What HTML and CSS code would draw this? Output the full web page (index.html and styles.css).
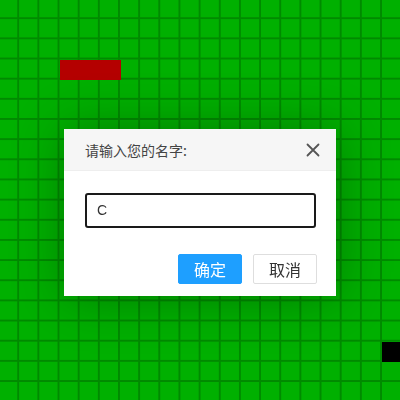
FILE: index.html
```html
<!DOCTYPE html>
<html lang="zh-CN">
<head>
<meta charset="utf-8">
<title>贪吃蛇</title>
<link rel="stylesheet" href="styles.css">
</head>
<body>
<div class="board">
  <div class="cell snake" style="grid-column: 4; grid-row: 4;"></div>
  <div class="cell snake" style="grid-column: 5; grid-row: 4;"></div>
  <div class="cell snake" style="grid-column: 6; grid-row: 4;"></div>
  <div class="cell food" style="grid-column: 20; grid-row: 18;"></div>
</div>

<div class="layer">
  <div class="layer-title">
    <span>请输入您的名字:</span>
    <button class="layer-close" aria-label="关闭">
      <svg width="14" height="14" viewBox="0 0 14 14"><path d="M1.5 1.5 L12.5 12.5 M12.5 1.5 L1.5 12.5" stroke="#555" stroke-width="1.8" fill="none" stroke-linecap="round"/></svg>
    </button>
  </div>
  <div class="layer-content">
    <div class="layer-input">C</div>
  </div>
  <div class="layer-btns">
    <span class="btn btn-ok">确定</span>
    <span class="btn btn-cancel">取消</span>
  </div>
</div>
</body>
</html>
```
FILE: styles.css
```css
html, body {
  margin: 0;
  padding: 0;
  width: 400px;
  height: 400px;
  overflow: hidden;
  background: #00b000;
  font-family: "Noto Sans CJK SC", "Liberation Sans", sans-serif;
}

.board {
  margin: -0.87px 0 0 -0.87px;
  width: 403.4px;
  height: 403.4px;
  display: grid;
  grid-template-columns: repeat(20, 20.17px);
  grid-template-rows: repeat(20, 20.17px);
  background-color: #00b000;
  background-image:
    linear-gradient(to right, transparent 18.6px, #008a00 18.6px, #008a00 20.17px),
    linear-gradient(to bottom, transparent 18.6px, #008a00 18.6px, #008a00 20.17px);
  background-size: 20.17px 20.17px;
}

.cell.snake {
  background: #b40000;
  margin: 0 -0.5px 0 0;
}
.cell.food {
  background: #000;
}

.layer {
  position: fixed;
  left: 64px;
  top: 129px;
  width: 272px;
  background: #fff;
  box-shadow: 1px 1px 50px rgba(0, 0, 0, 0.3);
  display: flex;
  flex-direction: column;
}

.layer-title {
  height: 41px;
  border-bottom: 1px solid #eee;
  background: #f6f6f6;
  display: flex;
  align-items: center;
  justify-content: space-between;
  padding: 0 16px 0 21px;
  font-size: 14px;
  color: #444;
}

.layer-close {
  border: 0;
  background: none;
  padding: 0;
  width: 14px;
  height: 14px;
  display: flex;
  margin-top: 1px;
}

.layer-content {
  padding: 22px 20px 0 21px;
}

.layer-input {
  box-sizing: border-box;
  width: 231px;
  height: 35px;
  border: 2px solid #1a1a1a;
  border-radius: 3px;
  padding-left: 10px;
  font-family: "Liberation Sans", sans-serif;
  font-size: 14px;
  line-height: 31px;
  color: #333;
}

.layer-btns {
  display: flex;
  justify-content: flex-end;
  gap: 11px;
  padding: 26px 19px 12px 0;
}

.btn {
  box-sizing: border-box;
  width: 64px;
  height: 30px;
  border-radius: 2px;
  font-size: 16px;
  line-height: 28px;
  text-align: center;
}

.btn-ok {
  background: #1e9fff;
  border: 1px solid #1e9fff;
  color: #fff;
}

.btn-cancel {
  background: #fff;
  border: 1px solid #dedede;
  color: #333;
}
```
